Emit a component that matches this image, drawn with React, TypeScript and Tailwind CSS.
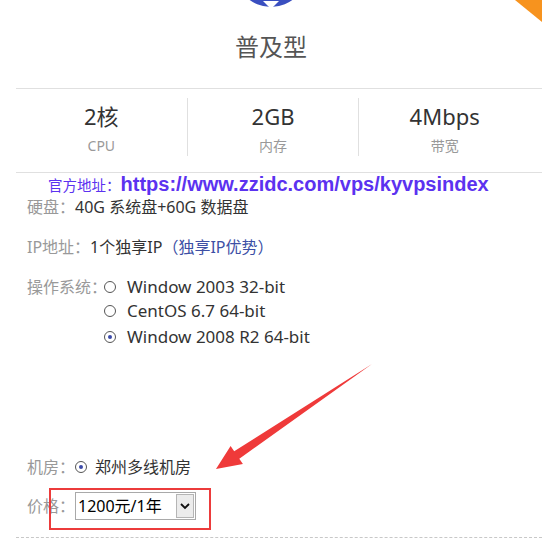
import React from "react";

const FONT = { fontFamily: '"Noto Sans", "Noto Sans CJK SC", sans-serif' };

const STATS = [
  { value: "2核", label: "CPU" },
  { value: "2GB", label: "内存" },
  { value: "4Mbps", label: "带宽" },
];

const OS_LIST = [
  { name: "Window 2003 32-bit", checked: false },
  { name: "CentOS 6.7 64-bit", checked: false },
  { name: "Window 2008 R2 64-bit", checked: true },
];

function Radio({ checked }: { checked: boolean }) {
  return (
    <span className="flex h-[12px] w-[12px] shrink-0 items-center justify-center rounded-full border border-[#555]">
      {checked && <span className="h-[4px] w-[4px] rounded-full bg-[#3b4aa8]" />}
    </span>
  );
}

export default function App() {
  return (
    <div className="relative h-[540px] w-[542px] overflow-hidden bg-white text-[#333]" style={FONT}>
      {/* logo stub + corner ribbon */}
      <div className="flex h-[7px] items-end justify-center overflow-hidden">
        <svg width="72" height="72" viewBox="0 0 72 72" className="shrink-0">
          <circle cx="36" cy="36" r="36" fill="#3a4fc0" />
          <path d="M28 66 L36 74 L44 66 Z" fill="#fff" />
        </svg>
      </div>
      <svg className="absolute right-0 top-0" width="30" height="24" viewBox="0 0 30 24">
        <polygon points="3,0 30,0 30,22" fill="#f7931e" />
      </svg>

      <h1 className="mt-[24px] text-center text-[24px] leading-[32px] text-[#555]">普及型</h1>

      <div className="ml-[16px] mt-[25px] border-t border-[#e0e0e0]">
        <div className="flex w-[514px] pb-[7px] pt-[9px]">
          {STATS.map((s, i) => (
            <div
              key={s.label}
              className={`flex flex-1 flex-col items-center ${i > 0 ? "border-l border-[#e0e0e0]" : ""}`}
            >
              <span className="mt-[3px] text-[22px] leading-[30px] text-[#333]">{s.value}</span>
              <span className="mt-[5px] text-[14px] leading-[20px] text-[#999]">{s.label}</span>
            </div>
          ))}
        </div>
        <div className="mt-[9px] border-t border-[#e0e0e0]" />
      </div>

      <div className="ml-[48px] flex h-[22px] items-baseline text-[14.5px] leading-[22px] text-[#5b32f0]">
        <span>官方地址：</span>
        <span className="font-bold" style={{ fontFamily: '"Liberation Sans", sans-serif', fontSize: 20 }}>
          https://www.zzidc.com/vps/kyvpsindex
        </span>
      </div>

      <div className="ml-[27px] flex flex-col text-[16px]">
        <div className="mt-[1px] leading-[22px]">
          <span className="text-[#999]">硬盘：</span>40G 系统盘+60G 数据盘
        </div>
        <div className="mt-[18px] leading-[22px]">
          <span className="text-[#999]">IP地址：</span>1个独享IP
          <span className="text-[#3d4fa5]">（独享IP优势）</span>
        </div>
        <div className="mt-[18px] flex">
          <span className="leading-[22px] text-[#999]">操作系统：</span>
          <div className="-ml-[3px] flex flex-col">
            {OS_LIST.map((o) => (
              <div key={o.name} className="flex h-[26px] items-center gap-[11px] text-[17px] first:h-[22px]">
                <Radio checked={o.checked} />
                <span>{o.name}</span>
              </div>
            ))}
          </div>
        </div>

        <div className="mt-[106px] flex items-center leading-[22px]">
          <span className="text-[#999]">机房：</span>
          <Radio checked />
          <span className="ml-[8px]">郑州多线机房</span>
        </div>

        <div className="mt-[14px] flex items-center">
          <span className="text-[#999]">价格：</span>
          <div className="flex h-[28px] w-[121px] items-center border border-[#a9a9a9] bg-white">
            <span className="flex-1 pl-[2px] text-[16px] text-black">1200元/1年</span>
            <span className="mr-[1px] flex h-[24px] w-[18px] items-center justify-center border border-[#b5b5b5] bg-[#ececec]">
              <svg width="10" height="8" viewBox="0 0 10 8">
                <path d="M1 2 L5 6 L9 2" stroke="#111" strokeWidth="1.8" fill="none" />
              </svg>
            </span>
          </div>
        </div>
      </div>

      <div className="absolute bottom-[2px] left-[16px] right-0 border-t border-dashed border-[#c8c8c8]" />

      {/* annotation: arrow and highlight box */}
      <svg className="absolute left-0 top-0" width="542" height="540" viewBox="0 0 542 540">
        <polygon
          points="216,469 230.6,445.9 234.2,451.3 372,364 239.3,458.7 242.9,464.1"
          fill="#ef3a3a"
        />
      </svg>
      <div className="absolute left-[49px] top-[488px] h-[42px] w-[162px] border-2 border-[#ec3b3b]" />
    </div>
  );
}
